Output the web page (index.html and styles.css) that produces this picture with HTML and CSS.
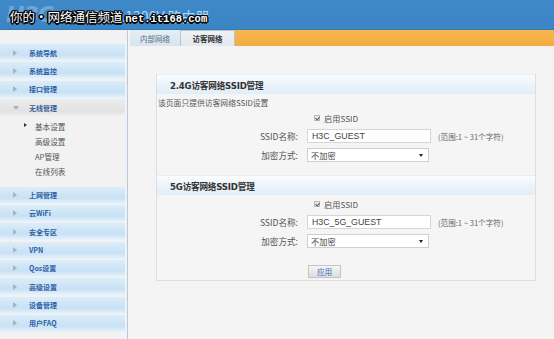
FILE: index.html
```html
<!DOCTYPE html>
<html lang="zh">
<head>
<meta charset="utf-8">
<link rel="stylesheet" href="styles.css">
</head>
<body>
<div class="page">
  <header class="top">
    <span class="logo">H3C</span>
    <span class="title">ERG3.1200V 路由器</span>
    <span class="mark">你的·网络通信频道 <b>net.it168.com</b></span>
  </header>
  <div class="main">
    <aside class="side">
      <div class="item"><i class="arr"></i>系统导航</div>
      <div class="item"><i class="arr"></i>系统监控</div>
      <div class="item"><i class="arr"></i>接口管理</div>
      <div class="item open"><i class="arr down"></i>无线管理</div>
      <div class="subs">
        <div class="sub cur"><i class="tri"></i>基本设置</div>
        <div class="sub">高级设置</div>
        <div class="sub">AP管理</div>
        <div class="sub">在线列表</div>
      </div>
      <div class="item"><i class="arr"></i>上网管理</div>
      <div class="item"><i class="arr"></i>云WiFi</div>
      <div class="item"><i class="arr"></i>安全专区</div>
      <div class="item"><i class="arr"></i>VPN</div>
      <div class="item"><i class="arr"></i>Qos设置</div>
      <div class="item"><i class="arr"></i>高级设置</div>
      <div class="item"><i class="arr"></i>设备管理</div>
      <div class="item"><i class="arr"></i>用户FAQ</div>
    </aside>
    <section class="content">
      <nav class="tabs">
        <span class="tab">内部网络</span>
        <span class="tab active">访客网络</span>
        <span class="fill"></span>
      </nav>
      <div class="box">
        <div class="sect">2.4G访客网络SSID管理</div>
        <div class="desc">该页面只提供访客网络SSID设置</div>
        <div class="row chk"><span class="lbl"></span><span class="cb"></span>启用SSID</div>
        <div class="row"><span class="lbl">SSID名称:</span><span class="inp">H3C_GUEST</span><span class="hint">(范围:1 ~ 31个字符)</span></div>
        <div class="row"><span class="lbl">加密方式:</span><span class="sel">不加密<i class="caret"></i></span></div>

        <div class="sect second">5G访客网络SSID管理</div>
        <div class="row chk first"><span class="lbl"></span><span class="cb"></span>启用SSID</div>
        <div class="row"><span class="lbl">SSID名称:</span><span class="inp">H3C_5G_GUEST</span><span class="hint">(范围:1 ~ 31个字符)</span></div>
        <div class="row"><span class="lbl">加密方式:</span><span class="sel">不加密<i class="caret"></i></span></div>
        <div class="row btnrow"><span class="lbl"></span><span class="btn">应用</span></div>
      </div>
    </section>
  </div>
</div>
</body>
</html>
```

FILE: styles.css
```css
* { box-sizing: border-box; }
html, body { margin: 0; padding: 0; }
body {
  width: 554px; height: 339px; overflow: hidden;
  background: #f4f4f4;
  font-family: "Noto Sans CJK SC", "Noto Sans", sans-serif;
  color: #444;
}
.page { width: 554px; height: 339px; display: flex; flex-direction: column; }

.top {
  position: relative;
  height: 30px;
  background: linear-gradient(#4089c8, #3c85c4);
  border-bottom: 1px solid #3a7bb6;
  display: flex; align-items: center;
  padding-left: 6px;
  flex: none;
}
.logo {
  font-family: "DejaVu Sans", sans-serif; font-weight: bold;
  font-size: 22px; color: #6fa6d6; letter-spacing: -1px;
  font-style: italic;
}
.title {
  margin-left: 34px;
  font-size: 14px; color: #b4d6f2;
  margin-top: 2px;
}
.mark {
  position: absolute; left: 10px; top: 7px;
  font-size: 12.5px; color: #fff;
  text-shadow: -1px -1px 0 #000, 1px -1px 0 #000, -1px 1px 0 #000, 1px 1px 0 #000, 0 1.5px 0 #000, 1.5px 0 0 #000, 0 -1.5px 0 #000, -1.5px 0 0 #000;
}
.mark b { font-family: "Liberation Mono", monospace; font-size: 10.5px; font-weight: bold; }

.main { flex: 1; display: flex; min-height: 0; }
.side {
  width: 128px; flex: none;
  background: #f2f2f2;
  border-right: 1px solid #b5cadd;
  padding-top: 14px;
}
.item {
  height: 17px; margin-bottom: 1.35px;
  display: flex; align-items: center;
  padding-left: 13px;
  width: 125px;
  background: linear-gradient(#dbedf9, #c8e1f4 65%, #e9f3fb);
  color: #2f5fa5; font-weight: bold; font-size: 7px;
}
.item.open { background: linear-gradient(#ececec, #e2e2e2 70%, #efefef); color: #3b5f95; }
.arr {
  width: 4px; height: 6px; margin-right: 12px;
  border-left: 4px solid #9aa7b4;
  border-top: 3px solid transparent; border-bottom: 3px solid transparent;
  opacity: .8;
}
.arr.down {
  width: 6px; height: 4px;
  border-top: 4px solid #9aa7b4; border-left: 3px solid transparent; border-right: 3px solid transparent; border-bottom: 0;
  margin-right: 10px;
}
.subs { padding-top: 1px; margin-bottom: 7px; }
.sub {
  height: 15.3px; display: flex; align-items: center;
  padding-left: 35px; font-size: 7.6px; color: #555;
  position: relative;
}
.tri {
  position: absolute; left: 24px; top: 5px;
  border-left: 3px solid #333; border-top: 2.5px solid transparent; border-bottom: 2.5px solid transparent;
}

.content { flex: 1; display: flex; flex-direction: column; padding-left: 2px; }
.tabs { height: 16px; display: flex; }
.tab {
  display: flex; align-items: center; justify-content: center;
  font-size: 7.5px;
}
.tab:first-child { width: 50px; background: linear-gradient(#e4eef6, #d7e5f0); color: #5a6c80; }
.tab.active {
  width: 55px; background: linear-gradient(#eef2f6, #e2e8ee);
  border: 1px solid #b9c4ce; border-bottom: 0;
  color: #333; font-weight: bold;
}
.fill { flex: 1; background: linear-gradient(#f7b651, #f4ab3f); }

.box {
  margin: 28px 0 0 26px;
  width: 380px;
  border: 1px solid #dedede;
  border-top: 0;
  background: #f5f5f5;
  padding-bottom: 2px;
}
.sect {
  height: 20px; display: flex; align-items: center;
  padding-left: 13px;
  background: linear-gradient(#fbfdff, #eef5fb 40%, #e1edf8);
  border-top: 1px solid #e8eef4;
  font-weight: bold; font-size: 8.6px; color: #333;
  font-family: "DejaVu Sans", "Noto Sans CJK SC", sans-serif;
  letter-spacing: -0.2px;
}
.sect.second { margin-top: 13px; }
.desc { height: 13px; margin-top: 2px; font-size: 7.8px; color: #555; display: flex; align-items: center; padding-left: 1px; }
.row { display: flex; align-items: center; height: 14px; font-size: 8.6px; color: #555; margin-top: 5px; }
.row.chk { margin-top: 3px; height: 12px; font-size: 8.2px; }
.lbl { width: 142px; text-align: right; padding-right: 1px; flex: none; }
.row .lbl { margin-right: 8px; }
.cb {
  width: 6px; height: 6px; margin: 0 4px 0 7px;
  border: 1px solid #bbb; background: #eee; position: relative;
}
.cb::after {
  content: ""; position: absolute; left: 1px; top: 0;
  width: 2px; height: 3px; border: solid #555; border-width: 0 1px 1px 0; transform: rotate(40deg);
}
.inp {
  width: 124px; height: 14px;
  background: #fff; border: 1px solid #d6d6d6;
  display: flex; align-items: center; padding-left: 4px;
  font-family: "Liberation Sans", sans-serif; font-size: 8.8px; color: #444;
}
.hint { margin-left: 7px; font-size: 7.6px; color: #666; }
.sel {
  width: 122px; height: 14px;
  background: #fff; border: 1px solid #cfcfcf;
  display: flex; align-items: center; padding-left: 3px;
  font-size: 8.2px; color: #444; position: relative;
}
.caret {
  position: absolute; right: 5px; top: 5px;
  border-top: 3px solid #222; border-left: 2px solid transparent; border-right: 2px solid transparent;
}
.btnrow { margin-top: 16px; height: 14px; }
.btnrow .lbl { margin-right: 9px; }
.btn {
  width: 33px; height: 13px;
  background: linear-gradient(#f6f6f6, #dcdcdc);
  border: 1px solid #c4c4c4;
  display: flex; align-items: center; justify-content: center;
  font-size: 7.6px; color: #3a6fc4;
}
```
